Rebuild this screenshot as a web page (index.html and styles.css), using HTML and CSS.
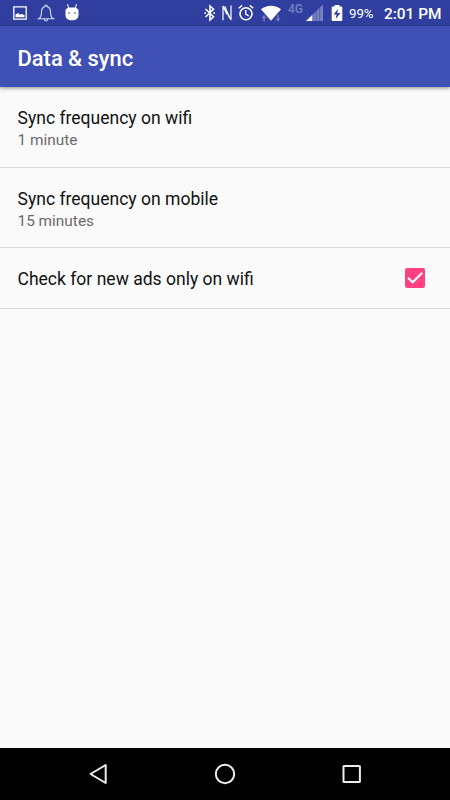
FILE: index.html
```html
<!DOCTYPE html>
<html lang="en">
<head>
  <meta charset="UTF-8" />
  <meta name="viewport" content="width=device-width, initial-scale=1.0" />
  <title>Data &amp; sync</title>
  <link rel="stylesheet" href="styles.css">
</head>
<body>
  <div class="screen">
    <div class="status-bar">
      <div class="notifications">
        <svg width="14" height="16" viewBox="0 0 14 16">
          <path fill="none" stroke="#fff" stroke-width="1.3" d="M.8 1.8h12.4v12.4H.8z" />
          <path fill="#fff" d="M2.5 12.3V9.5L5 8l1.6 1.8L8 9l3.500 1v2.300z" />
        </svg>
        <svg width="18" height="18" viewBox="0 0 18 18">
          <path fill="none" stroke="#d5d9f2" stroke-width="1.1" d="M1.5 14.8c2.4-1.4 3-3.7 3-6.9 0-3 1.600-4.900 3.600-5.300V1.200h1.800v1.400c2 .4 3.600 2.300 3.600 5.300 0 3.200.6 5.500 3 6.900zM7.300 15c.1 2.600 3.300 2.600 3.400 0" />
        </svg>
        <svg width="14" height="18" viewBox="0 0 14 18">
          <path fill="none" stroke="#fff" stroke-width="1" d="M2.5 0l1.200 4.500M11.500 0l-1.200 4.500" />
          <path fill="#fff" d="M3 3.500h8c.3 1.300 2.500 1 2.500 3v4.500c0 3.500-2.500 5.300-6.500 5.300S.5 14.500.5 11V6.500c0-2 2.200-1.700 2.500-3z" />
          <circle cx="4" cy="9" r=".8" fill="#303f9f" />
          <circle cx="10" cy="9" r=".8" fill="#303f9f" />
        </svg>
      </div>

      <div class="system">
        <svg class="bluetooth" width="12" height="18" viewBox="0 0 12 18">
          <path fill="none" stroke="#fff" stroke-width="1.6" d="M1.500 5l8 7.800L6 16V2l3.500 3.200L1.500 13" />
          <path fill="#fff" d="M.5 8.200h1.500v1.800H.5zM9.500 8.200H11v1.800H9.500z" />
        </svg>
        <svg class="nfc" width="10" height="18" viewBox="0 0 10 18">
          <path fill="none" stroke="#fff" stroke-width="1.2" d="M1 16.200V2l4 8.500M2.800 2.200L7.500 14M9 1.500V16L4.800 7.200" />
        </svg>
        <svg class="alarm" width="16" height="18" viewBox="0 0 16 18">
          <circle cx="8" cy="9.700" r="6" fill="none" stroke="#fff" stroke-width="1.6" />
          <path fill="none" stroke="#fff" stroke-width="1.4" d="M7.700 6v4.200l3 1.700M.7 4.300l3.500-2.900M15.300 4.300l-3.500-2.900" />
        </svg>
        <svg class="wifi" width="20" height="18" viewBox="0 0 20 18">
          <path fill="#7680c2" d="M3 11l2.500 3H3.700v3.500H2.300V14H.5zM17 17.500l-2.500-3h1.800V11h1.400v3.500h1.800z" />
          <path fill="#fff" d="M0 5.300C5.800.5 14.200.5 20 5.300L10 16.800z" />
        </svg>
        <span class="network">4G</span>
        <svg class="signal" width="17" height="18" viewBox="0 0 17 18">
          <path fill="#7680c2" d="M0 17L17 .5V17z" />
          <path fill="#fff" d="M0 17l6.500-6.300V17z" />
          <path stroke="#4b57ac" stroke-width=".8" d="M7 10v7M10.300 7v10M13.700 4v13" />
        </svg>
        <svg class="battery" width="12" height="18" viewBox="0 0 12 18">
          <path fill="#fff" d="M3.500 1h5v1.600H10c.8 0 1.300.5 1.300 1.200v12.100c0 .7-.5 1.200-1.300 1.200H2c-.8 0-1.300-.5-1.300-1.200V3.800c0-.7.5-1.200 1.300-1.200h1.500z" />
          <path fill="#303f9f" d="M7 5L2.500 10.500h3L4.800 15l4.700-6H6.300z" />
        </svg>
        <span class="percent">99%</span>
        <span class="time">2:01 PM</span>
      </div>
    </div>

    <header class="app-bar">
      <h1>Data &amp; sync</h1>
    </header>

    <main class="settings">
      <div class="setting">
        <div class="title">Sync frequency on wifi</div>
        <div class="summary">1 minute</div>
      </div>
      <div class="setting">
        <div class="title">Sync frequency on mobile</div>
        <div class="summary">15 minutes</div>
      </div>
      <div class="setting check-setting">
        <div class="title">Check for new ads only on wifi</div>
        <svg width="20" height="20" viewBox="0 0 20 20">
          <rect width="20" height="20" rx="2.2" fill="#ff4081" />
          <path fill="none" stroke="#fff" stroke-width="2.1" d="M3 9.700l4.700 4.600L17.200 4.800" />
        </svg>
      </div>
    </main>

    <nav class="nav-bar">
      <svg width="22" height="22" viewBox="0 0 22 22">
        <path fill="none" stroke="#eee" stroke-width="2" stroke-linejoin="round" d="M2.500 11L17.700 2v18z" />
      </svg>
      <svg width="22" height="22" viewBox="0 0 22 22">
        <circle cx="11" cy="11" r="9.200" fill="none" stroke="#eee" stroke-width="2" />
      </svg>
      <svg width="22" height="22" viewBox="0 0 22 22">
        <rect x="2.500" y="3" width="16.400" height="16" rx=".5" fill="none" stroke="#eee" stroke-width="2" />
      </svg>
    </nav>
  </div>
</body>
</html>
```

FILE: styles.css
```css
body {
  margin: 0;
  font-family: Roboto, "Liberation Sans", sans-serif;
  background-color: #fafafa;
}

.screen {
  display: flex;
  flex-direction: column;
  height: 100vh;
}

svg {
  display: block;
  flex: none;
}

.status-bar {
  display: flex;
  justify-content: space-between;
  height: 26px;
  padding: 0 9px 0 13px;
  background-color: #303f9f;
  color: white;
}

.notifications,
.system {
  display: flex;
  align-items: center;
}

.notifications {
  gap: 10px;
}

.nfc {
  margin-left: 6px;
}

.alarm {
  margin-left: 6px;
}

.wifi {
  margin-left: 7px;
}

.network {
  width: 17px;
  margin: -8px 0 0 7px;
  font-size: 12px;
  font-weight: 500;
  color: #7680c2;
}

.signal {
  margin-left: 1px;
}

.battery {
  margin-left: 8px;
}

.percent {
  width: 35px;
  margin: 1px 0 0 6px;
  font-size: 13.2px;
}

.time {
  width: 57px;
  margin-top: 2px;
  font-size: 15.4px;
  font-weight: 500;
  white-space: nowrap;
}

.app-bar {
  display: flex;
  align-items: center;
  height: 61px;
  padding: 3px 17.5px 0;
  box-sizing: border-box;
  background-color: #3f51b5;
  box-shadow: 0 1px 4px rgba(0, 0, 0, 0.45);
}

.app-bar h1 {
  margin: 0;
  font-size: 21.9px;
  font-weight: 500;
  color: white;
}

.settings {
  flex: 1;
}

.setting {
  height: 80.5px;
  padding: 20px 17.5px 0;
  box-sizing: border-box;
  border-bottom: 1px solid #d9d9d9;
}

.title {
  font-size: 17.55px;
  line-height: 23px;
  color: #111;
}

.summary {
  font-size: 15.4px;
  line-height: 21px;
  color: #6b6b6b;
}

.check-setting {
  display: flex;
  align-items: center;
  justify-content: space-between;
  height: 60.5px;
  padding: 0 25px 0 17.5px;
}

.check-setting .title {
  padding-top: 3px;
}

.nav-bar {
  display: flex;
  align-items: center;
  justify-content: center;
  gap: 104.5px;
  height: 52px;
  background-color: black;
}
```
